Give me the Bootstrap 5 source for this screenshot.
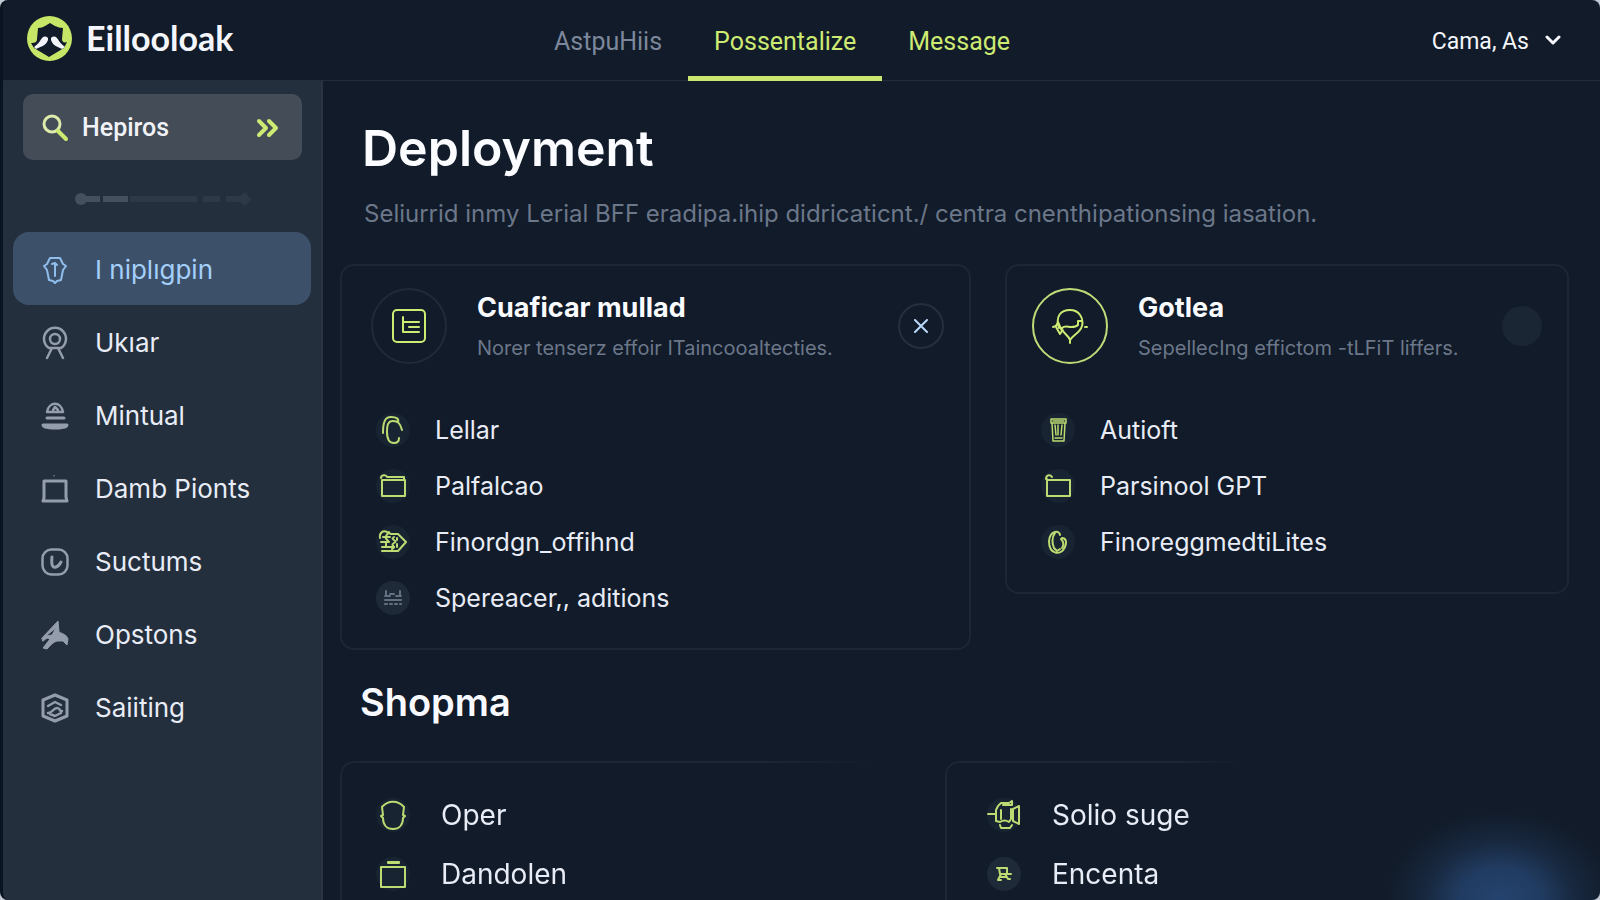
<!DOCTYPE html>
<html lang="en">
<head>
<meta charset="utf-8">
<meta name="viewport" content="width=device-width, initial-scale=1">
<title>Deployment</title>
<link href="https://cdn.jsdelivr.net/npm/bootstrap@5.3.0/dist/css/bootstrap.min.css" rel="stylesheet">
<style>
:root{--bg:#111b29;--line:#1c2734;--lime:#cdea72;--text:#e8ecf6;--muted:#6c778a}
body{background:#c3cad6;font-family:Inter,"Liberation Sans",sans-serif;color:var(--text)}
.app{height:100vh;background:var(--bg);border-left:3px solid #0a1421;border-radius:8px}
svg{display:block;fill:none;stroke:currentColor;stroke-linecap:round;stroke-linejoin:round;flex:none}
svg.solid{stroke:none}
.topbar{height:81px;border-bottom:1px solid #222d3b}
.brand-area{width:33%;padding:0 0 4px 24px;gap:14px}
.brand-name{font:700 34px/40px Lato,sans-serif;color:#f4f6fb}
.tab-link{font:400 25px/32px Roboto,sans-serif;height:81px;padding:26px 26px 0;color:var(--lime);text-decoration:none;border-bottom:5px solid transparent}
.tab-link.dim{color:#7c879b;padding-left:24px}
.tab-link.current{border-color:#cbe76f}
.user-menu{font:400 23px/32px Roboto,sans-serif;color:#f4f6fb;background:none;border:0;padding:4px 0 0;margin-right:39px}
.user-menu svg{margin-bottom:2px}
.sidebar{width:320px;background:#242f3d;border-right:2px solid #293341}
.search-box{height:66px;margin:13px 19px 0 20px;padding:2px 22px 0 18px;background:#444c57;border-radius:10px;color:var(--lime)}
.search-box label{margin-right:13px}
.search-box input{font:500 25px/32px Roboto,sans-serif;color:#f1f3f9;background:none;border:0;outline:0;padding:0;min-width:0}
.search-box button{background:none;border:0;padding:0;color:var(--lime)}
.steps{margin:31px 0 0 72px;height:16px}
.side-nav{margin:25px 10px 0}
.side-link{height:73px;padding:2px 0 0 28px;gap:26px;font-size:26px;line-height:32px;color:var(--text);text-decoration:none;border-radius:16px}
.side-link svg{color:#939dac}
.side-link.current{background:#3d5069;color:#a3cffa}
.side-link.current svg{color:#8fbdec}
.content{padding:37px 31px 0 17px;background:radial-gradient(ellipse 115px 90px at right 100px bottom 0,#24436e 0,#213c62 35%,rgba(28,49,78,.6) 65%,transparent)}
h1{font-size:50px;line-height:60px;font-weight:600;color:#fbfcff;margin:0 0 20px 22px}
.intro{font-size:24px;line-height:32px;color:var(--muted);margin:0 0 34px 24px}
h2{font-size:38px;line-height:44px;font-weight:600;color:#f8faff;margin:30px 0 37px 20px}
.panels{display:grid;gap:34px;align-items:start;grid-template-columns:631fr 564fr}
.panels.lower{grid-template-columns:571fr 624fr}
.panel{border:2px solid var(--line);border-radius:14px;padding:22px 25px}
.panel.fade-edge{border-right:0;-webkit-mask-image:linear-gradient(90deg,#000 75%,transparent 95%);mask-image:linear-gradient(90deg,#000 75%,transparent 95%)}
.panel.fade-early{-webkit-mask-image:linear-gradient(90deg,#000 38%,transparent 48%);mask-image:linear-gradient(90deg,#000 38%,transparent 48%)}
.panel-head{gap:30px;margin-bottom:38px}
.emblem{width:76px;height:76px;border:2px solid #202b38;border-radius:50%;color:var(--lime)}
.emblem.lit{border-color:#bddc78}
h3{font-size:27px;line-height:32px;font-weight:700;color:#fafbff;margin:2px 0 0}
.panel-note{font-size:20px;line-height:28px;color:var(--muted);margin:10px 0 0}
.round-btn{width:46px;height:46px;border:2px solid #252f3d;border-radius:50%;background:none;color:#b9d8fa;padding:0}
.round-dot{width:40px;height:40px;border:0;border-radius:50%;background:#1a2633;padding:0}
.feature-list{margin:0;padding:0 0 0 9px;list-style:none}
.feature-list li{height:56px;gap:25px;font-size:25px;line-height:32px}
.lower .feature-list li{height:59px;gap:31px;font-size:28px}
.disc{width:34px;height:34px;border-radius:50%;background:#182431;color:#bddb72}
.disc.muted-disc{background:#1e2a38;color:#637080}
</style>
</head>
<body>
<div class="app d-flex flex-column overflow-hidden">
  <header class="topbar d-flex align-items-center flex-shrink-0">
    <div class="brand-area d-flex align-items-center">
      <svg class="solid" width="45" height="45" viewBox="0 0 45 45"><circle cx="22.500" cy="22.500" r="22.500" fill="#c5e667"/><path d="M11 12c3 0 5-1 7-2l5-3 5 3c3 1 5 2 8 2l-1 11c0 3 2 4 5 3l-3 6-15 9-15-9-3-5c4 0 6-1 6-4z" fill="#111b29"/><path d="M21 22c-3-3-6-1-8 3-2 3-4 4-6 6l2 2c4-2 10-3 12-9zM24 22c3-3 6-1 8 3 2 3 4 4 6 6l-3 2c-4-2-9-3-11-9z" fill="#f2f4fa"/></svg>
      <span class="brand-name">Eillooloak</span>
    </div>
    <nav class="d-flex" aria-label="Main">
      <a class="tab-link dim" href="#">AstpuHiis</a>
      <a class="tab-link current" href="#" aria-current="page">Possentalize</a>
      <a class="tab-link" href="#">Message</a>
    </nav>
    <button class="user-menu ms-auto d-flex align-items-center gap-3" type="button">Cama, As
      <svg width="16" height="16" viewBox="0 0 16 16" stroke-width="3"><path d="M2 4l6 6 6-6"/></svg>
    </button>
  </header>
  <div class="d-flex flex-grow-1 overflow-hidden">
    <aside class="sidebar flex-shrink-0">
      <form class="search-box d-flex align-items-center" role="search">
        <label for="q"><svg width="28" height="28" viewBox="0 0 28 28" stroke-width="4"><circle cx="11" cy="10" r="8" stroke="#dcebab" stroke-width="3"/><path d="M17 17l8 8"/></svg></label>
        <input class="flex-grow-1" id="q" type="text" value="Hepiros" aria-label="Search">
        <button type="button" aria-label="Expand"><svg width="24" height="22" viewBox="0 0 24 22" stroke-width="4"><path d="M3 4l7 7-7 7M13 4l7 7-7 7"/></svg></button>
      </form>
      <div class="steps"><svg class="solid" width="178" height="16" viewBox="0 0 178 16"><g fill="#44505e"><circle cx="6" cy="8" r="6"/><path d="M6 5h19v6H6zM28 5h25v6H28z"/></g><g fill="#2d3946"><path d="M55 5h67v6H55zM128 5h17v6h-17zM151 5h14l5-4 6 7-6 7-5-4h-14z"/></g></svg></div>
      <nav class="side-nav d-flex flex-column" aria-label="Sections">
        <a class="side-link current d-flex align-items-center" href="#"><svg width="28" height="28" viewBox="0 0 28 28" stroke-width="2"><path d="M9 2h10l3 6 3 2-3 4-2 10-4 1-2 2-2-2-4-1-2-10-3-4 3-2zM14 7v13M11 8l3-1 2 2"/></svg>I niplıgpin</a>
        <a class="side-link d-flex align-items-center" href="#"><svg width="28" height="34" viewBox="0 0 28 34" stroke-width="2.500"><path d="M8 22a11 11 0 1 1 12 0M11 22L6 32M17 22l5 10M9 22h10"/><circle cx="14" cy="13" r="5"/></svg>Ukıar</a>
        <a class="side-link d-flex align-items-center" href="#"><svg width="28" height="30" viewBox="0 0 28 30" stroke-width="3"><path d="M6 11c2-11 14-11 16 0zM12 9l2-3 3 3" stroke-width="2.500"/><path d="M6 17h17" /><path d="M2 24h24c0 4-24 4-24 0z" fill="currentColor"/></svg>Mintual</a>
        <a class="side-link d-flex align-items-center" href="#"><svg width="28" height="28" viewBox="0 0 28 28" stroke-width="3"><path d="M3 6h22v16l1 4H2l1-3z"/><path d="M13 0v1" stroke-width="1"/></svg>Damb Pionts</a>
        <a class="side-link d-flex align-items-center" href="#"><svg width="28" height="28" viewBox="0 0 28 28" stroke-width="2.500"><rect x="1.500" y="1.500" width="25" height="25" rx="9"/><path d="M11 9c-1 9 1 11 4 10s4-3 5-5" stroke-width="3"/></svg>Suctums</a>
        <a class="side-link d-flex align-items-center" href="#"><svg width="28" height="30" viewBox="0 0 28 30" stroke-width="1"><path fill="currentColor" fill-rule="evenodd" d="M1 18L17 1l1 11c4 2 8 3 9 7l-1 6-4-4-6 0c-4 1-7 5-10 8l-4-1 7-9-3-1-4 3zM5 16l6-1 4-7z"/></svg>Opstons</a>
        <a class="side-link d-flex align-items-center" href="#"><svg width="28" height="30" viewBox="0 0 28 30" stroke-width="3"><path d="M14 2l12 5v16l-12 5-12-5V7z"/><path d="M7 13l7-4 6 3M7 20c5 0 5-5 9-5s2 4 5 3M9 21l5 2 6-3" stroke-width="2.500"/></svg>Saiiting</a>
      </nav>
    </aside>
    <main class="content flex-grow-1 overflow-hidden">
      <h1>Deployment</h1>
      <p class="intro">Seliurrid inmy Lerial BFF eradipa.ihip didricaticnt./ centra cnenthipationsing iasation.</p>
      <div class="panels">
        <section class="panel">
          <div class="panel-head d-flex align-items-center ps-1">
            <span class="emblem d-flex align-items-center justify-content-center flex-shrink-0"><svg width="34" height="34" viewBox="0 0 34 34" stroke-width="2"><rect x="1" y="1" width="32" height="32" rx="4"/><path d="M11 8v15h16M12 13h15M17 18h10"/></svg></span>
            <div class="flex-grow-1"><h3>Cuaficar mullad</h3><p class="panel-note">Norer tenserz effoir ITaincooaltecties.</p></div>
            <button class="round-btn d-flex align-items-center justify-content-center" type="button" aria-label="Close"><svg width="14" height="14" viewBox="0 0 14 14" stroke-width="2"><path d="M1 1l12 12M13 1L1 13"/></svg></button>
          </div>
          <ul class="feature-list">
            <li class="d-flex align-items-center"><span class="disc d-flex align-items-center justify-content-center"><svg width="22" height="28" viewBox="0 0 22 28" stroke-width="2"><path d="M1 17C1 6 3 1 9 1s8 2 7 5M20 14C18 7 16 5 11 5s-6 4-6 11 2 11 7 11c4 0 5-2 5-5"/></svg></span>Lellar</li>
            <li class="d-flex align-items-center"><span class="disc d-flex align-items-center justify-content-center"><svg width="27" height="24" viewBox="0 0 27 24" stroke-width="2"><path d="M2 6h23v16H2zM1 4c0-3 5-4 6-1h17v3"/></svg></span>Palfalcao</li>
            <li class="d-flex align-items-center"><span class="disc d-flex align-items-center justify-content-center"><svg width="28" height="24" viewBox="0 0 28 24" stroke-width="2"><path d="M1 8C0 3 4 0 8 2l4 2h7l8 8-8 9H3M2 12h8M4 7h7M3 17h10M10 2c-4 5-5 5 0 10M15 7c-5 3 5 3 0 6s4 3-2 6M18 8v2M18 14v3M7 12v5"/></svg></span>Finordgn_offihnd</li>
            <li class="d-flex align-items-center"><span class="disc muted-disc d-flex align-items-center justify-content-center"><svg width="18" height="16" viewBox="0 0 18 16" stroke-width="2"><path d="M2 1v5M16 1v5M1 6h5M12 6h5M6 4h4M1 10h16" /><path d="M1 14h16" stroke-dasharray="2 3"/></svg></span>Spereacer,, aditions</li>
          </ul>
        </section>
        <section class="panel">
          <div class="panel-head d-flex align-items-center">
            <span class="emblem lit d-flex align-items-center justify-content-center flex-shrink-0"><svg width="36" height="36" viewBox="0 0 36 36" stroke-width="2"><path d="M7 20C3 8 9 2 18 2c9 0 14 8 12 16-2 7-9 9-12 14-1-4-7-7-8-11M10 20c3-3 6-1 9-1 4 0 6-1 7-2v-4h3M1 19l3-1 2-4M4 19l4 7 2-3-4-9M33 19h2M18 32v3"/></svg></span>
            <div class="flex-grow-1"><h3>Gotlea</h3><p class="panel-note">SepellecIng effictom -tLFiT liffers.</p></div>
            <button class="round-dot" type="button" aria-label="Toggle"></button>
          </div>
          <ul class="feature-list">
            <li class="d-flex align-items-center"><span class="disc d-flex align-items-center justify-content-center"><svg width="17" height="24" viewBox="0 0 17 24" stroke-width="1.500"><path d="M1 1h15v4H1zM2 5l1 18h11l1-18M5 7l1 10M8 7v10M12 7l-1 10M3 3h11M5 20h7"/></svg></span>Autioft</li>
            <li class="d-flex align-items-center"><span class="disc d-flex align-items-center justify-content-center"><svg width="26" height="24" viewBox="0 0 26 24" stroke-width="2"><path d="M2 6h23v16H2zM1 5c0-4 4-5 6-2M2 5v5"/></svg></span>Parsinool GPT</li>
            <li class="d-flex align-items-center"><span class="disc d-flex align-items-center justify-content-center"><svg width="20" height="24" viewBox="0 0 20 24" stroke-width="2"><path d="M12 5C12 0 2 0 1 11c0 14 12 15 16 6 2-5 1-9-3-9M13 9c3 3 3 6 1 9M7 3c-3 4-3 10-1 15M6 18l3 3 3-2"/></svg></span>FinoreggmedtiLites</li>
          </ul>
        </section>
      </div>
      <h2>Shopma</h2>
      <div class="panels lower">
        <section class="panel fade-edge">
          <ul class="feature-list">
            <li class="d-flex align-items-center"><span class="disc d-flex align-items-center justify-content-center"><svg width="26" height="30" viewBox="0 0 26 30" stroke-width="2"><path d="M2 7c6-7 16-7 22 0l-1 8 2 1-2 2c0 7-4 11-10 11S3 25 3 18l-2-2 2-1z"/></svg></span>Oper</li>
            <li class="d-flex align-items-center"><span class="disc d-flex align-items-center justify-content-center"><svg width="26" height="28" viewBox="0 0 26 28" stroke-width="2"><path d="M1 7h24v20H1zM8 2h11v1H8z"/></svg></span>Dandolen</li>
          </ul>
        </section>
        <section class="panel fade-edge fade-early ps-4">
          <ul class="feature-list ps-3">
            <li class="d-flex align-items-center"><span class="disc d-flex align-items-center justify-content-center"><svg width="34" height="30" viewBox="0 0 34 30" stroke-width="2"><path d="M1 14h7M11 6l-2 4v11l4 1c3-2 6-2 9 0l2-3V9M14 10v9M12 5l2-2h8l3-2v4h-9M13 25l1 3h9l2-3M26 9l6-3v18l-6-3z"/></svg></span>Solio suge</li>
            <li class="d-flex align-items-center"><span class="disc muted-disc d-flex align-items-center justify-content-center"><svg width="16" height="16" viewBox="0 0 16 16" stroke="#bddb72" stroke-width="2" style="color:#bddb72"><path d="M3 2h8v6H4zM1 2h1M11 8h4M5 8l-3 6h3M9 8l3 5h2M5 11h5"/></svg></span>Encenta</li>
          </ul>
        </section>
      </div>
    </main>
  </div>
</div>
<script src="https://cdn.jsdelivr.net/npm/bootstrap@5.3.0/dist/js/bootstrap.bundle.min.js"></script>
</body>
</html>
